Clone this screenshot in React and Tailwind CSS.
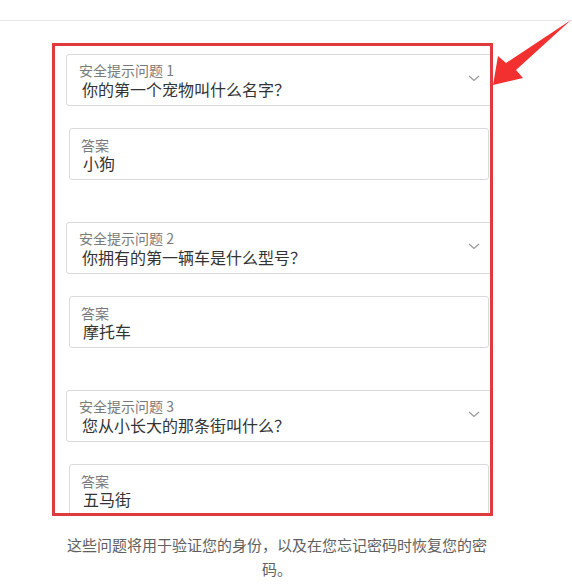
import React from "react";

const questions = [
  { label: "安全提示问题 1", question: "你的第一个宠物叫什么名字？", answer: "小狗" },
  { label: "安全提示问题 2", question: "你拥有的第一辆车是什么型号？", answer: "摩托车" },
  { label: "安全提示问题 3", question: "您从小长大的那条街叫什么？", answer: "五马街" },
];

const Chevron = () => (
  <svg width="12" height="7" viewBox="0 0 12 7" className="absolute right-[12px] top-[20px]">
    <path d="M1 1l5 4.5L11 1" fill="none" stroke="#9a9a9a" strokeWidth="1.3" />
  </svg>
);

const QuestionSelect = ({ label, question }) => (
  <div className="relative h-[52px] w-[427px] rounded-[3px] border border-[#dadada] bg-white pl-[12px] pt-[7px]">
    <div className="text-[14px] leading-[17px] text-[#7a7a7a]">{label}</div>
    <div className="pl-[3px] text-[16px] leading-[20px] text-[#333]">{question}</div>
    <Chevron />
  </div>
);

const AnswerField = ({ answer }) => (
  <div className="ml-[3px] h-[52px] w-[420px] rounded-[3px] border border-[#dadada] bg-white pl-[11px] pt-[8px]">
    <div className="text-[14px] leading-[17px] text-[#7a7a7a]">答案</div>
    <div className="pl-[2px] text-[16px] leading-[19px] text-[#333]">{answer}</div>
  </div>
);

const Arrow = () => (
  <svg
    width="92"
    height="100"
    viewBox="0 0 92 100"
    className="absolute right-0 top-0"
  >
    <polygon
      points="91,20 36,70 43,78 13,85 18,56 26,63"
      fill="#f2302f"
    />
  </svg>
);

export default function App() {
  return (
    <div
      className="relative h-[586px] w-[572px] overflow-hidden bg-white"
      style={{ fontFamily: '"Noto Sans CJK SC", "Noto Sans", sans-serif' }}
    >
      <div className="mt-[20px] h-px w-full bg-[#e8e8e8]" />

      <div className="ml-[52px] mt-[22px] h-[473px] w-[441px] overflow-hidden border-[3px] border-[#e0393e]">
        <div className="flex flex-col pl-[11px] pt-[8px]">
          {questions.map((q, i) => (
            <div key={i} className={i > 0 ? "mt-[42px]" : ""}>
              <QuestionSelect label={q.label} question={q.question} />
              <div className="mt-[22px]">
                <AnswerField answer={q.answer} />
              </div>
            </div>
          ))}
        </div>
      </div>

      <p className="ml-[62px] mt-[17px] w-[430px] text-center text-[15px] leading-[24px] text-[#606060]">
        这些问题将用于验证您的身份，以及在您忘记密码时恢复您的密码。
      </p>

      <Arrow />
    </div>
  );
}
